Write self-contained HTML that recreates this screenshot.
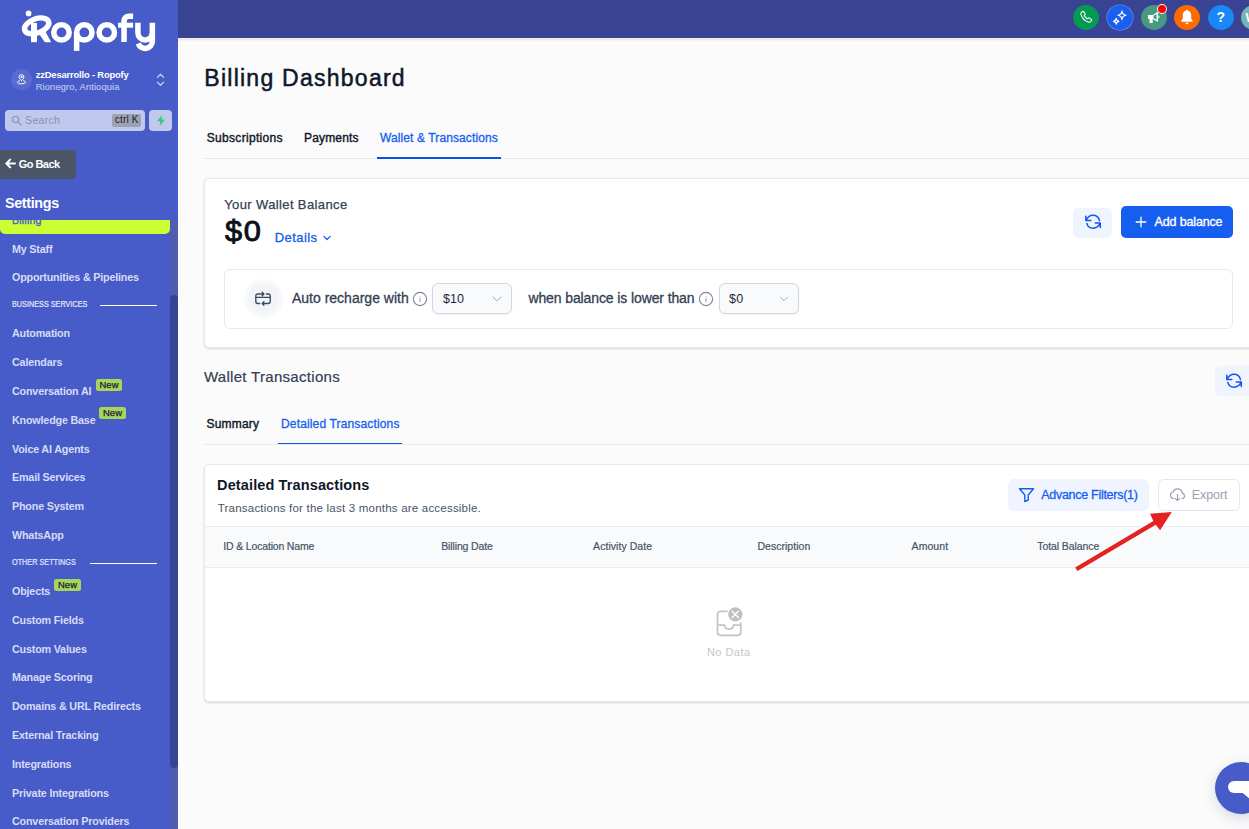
<!DOCTYPE html>
<html lang="en">
<head>
<meta charset="utf-8">
<title>Billing Dashboard</title>
<style>
*{box-sizing:border-box;margin:0;padding:0}
html,body{width:1249px;height:829px;overflow:hidden;background:#fbfbfc;font-family:"Liberation Sans",sans-serif;}
body{position:relative}
.abs{position:absolute}
.t{position:absolute;white-space:nowrap;line-height:1}
/* sidebar */
#sidebar{position:absolute;left:0;top:0;width:178px;height:829px;background:#475cc8;overflow:hidden}
#topbar{position:absolute;left:178px;top:0;width:1071px;height:38px;background:#384394}
#topshadow{position:absolute;left:178px;top:38px;width:1071px;height:4px;background:linear-gradient(#f3f2ee 0%,#ebebeb 35%,#f6f6f7 75%,#fbfbfc 100%)}
.nav{position:absolute;left:11.7px;white-space:nowrap;line-height:14px;font-size:11.7px;font-weight:bold;color:#d6dbf6;letter-spacing:-0.2px;transform:scaleX(.92);transform-origin:0 0}
.sec{position:absolute;left:11.7px;white-space:nowrap;line-height:8.7px;font-size:8.7px;color:#e4e7fa;letter-spacing:0;transform:scaleX(.836);transform-origin:0 0;-webkit-text-stroke:.2px #e4e7fa}
.secline{position:absolute;height:1px;background:#fff}
.new{position:absolute;height:12px;border-radius:2.500px;background:#a5d65a;color:#172036;font-size:9.400px;line-height:12.400px;text-align:center;-webkit-text-stroke:.25px #172036;letter-spacing:.15px}
.circ{position:absolute;top:4.900px;width:26px;height:25.100px;border-radius:50%}
/* main */
.card{position:absolute;background:#fff;border:1px solid #e6e8ec;border-radius:5px;box-shadow:0 1px 2px rgba(16,24,40,.10),0 1px 3px rgba(16,24,40,.05)}
.tab{position:absolute;white-space:nowrap;font-size:12px;line-height:1;color:#101828;-webkit-text-stroke:.4px #101828}
.tab.act{color:#155eef;-webkit-text-stroke:.3px #155eef}
.th{position:absolute;top:540px;white-space:nowrap;font-size:10.5px;line-height:1;color:#475467;-webkit-text-stroke:.2px #475467}
.sel{position:absolute;top:283.300px;height:31.200px;border:1px solid #d3d8e0;border-radius:6px;background:#f9fafb;box-shadow:0 1px 2px rgba(16,24,40,.05)}
</style>
</head>
<body>
<div id="main">
<div class="t" id="title" style="left:204.34px;top:67.13px;font-size:23px;color:#0f172a;-webkit-text-stroke:.5px #0f172a;letter-spacing:1.253px">Billing Dashboard</div>
<div id="tab1" class="tab" style="left:206.74px;top:132.14px;font-size:12px;letter-spacing:0.314px">Subscriptions</div>
<div id="tab2" class="tab" style="left:304.04px;top:132.14px;font-size:12px;letter-spacing:0.166px">Payments</div>
<div id="tab3" class="tab act" style="left:380.04px;top:132.14px;font-size:12px;letter-spacing:0.106px">Wallet &amp; Transactions</div>
<div class="abs" style="left:204px;top:158px;width:1045px;height:1px;background:#e7e9ed"></div>
<div class="abs" style="left:377px;top:157px;width:124px;height:2px;background:#0b4fea"></div>

<div class="card" style="left:204px;top:178px;width:1080px;height:169.500px"></div>
<div class="t" id="ywb" style="left:224.19px;top:197.50px;font-size:13px;color:#344054;-webkit-text-stroke:.25px #344054;letter-spacing:0.379px">Your Wallet Balance</div>
<div class="t" id="bal" style="left:225.2px;top:217.4px;font-size:29px;color:#0b0f19;letter-spacing:1.6px;-webkit-text-stroke:.9px #0b0f19;transform:scaleX(1.06);transform-origin:0 0">$0</div>
<div class="t" id="details" style="left:274.79px;top:230.80px;font-size:13px;color:#155eef;-webkit-text-stroke:.3px #155eef;letter-spacing:0.430px">Details</div>
<svg class="abs" style="left:321.500px;top:234px" width="10" height="8" viewBox="0 0 10 8" fill="none" stroke="#155eef" stroke-width="1.200" stroke-linecap="round" stroke-linejoin="round"><path d="M1.800 2.300L5 5.500L8.200 2.300"/></svg>
<div class="abs" style="left:1073px;top:208px;width:39px;height:30px;border-radius:5px;background:#eff4ff"></div>
<svg class="abs rf" style="left:1085px;top:214px" width="17" height="16" viewBox="0 0 17 16" fill="none" stroke="#1257ee" stroke-width="1.500" stroke-linecap="round" stroke-linejoin="round"><path d="M.8 2.200V6.600H5.800M.9 6.500C2.500 3.300 5 1.300 7.800 1.300C11.200 1.300 13.800 3.600 14.500 6.600M10.300 9.100H15.300V13.600M15.200 9.200C13.600 12.400 11 14.200 8.100 14.200C5 14.200 2.500 12.300 1.800 9.400"/></svg>
<div class="abs" style="left:1121px;top:206px;width:112px;height:32px;border-radius:5px;background:#155eef"></div>
<svg class="abs" style="left:1135px;top:216px" width="12" height="12" viewBox="0 0 12 12" stroke="#fff" stroke-width="1.300" stroke-linecap="round"><path d="M6 1.200V10.800M1.200 6H10.800"/></svg>
<div class="t" id="addbal" style="left:1154.61px;top:215.72px;font-size:12.5px;color:#fff;-webkit-text-stroke:.35px #fff;letter-spacing:-0.154px">Add balance</div>

<div class="abs" style="left:224px;top:269.300px;width:1009px;height:59.400px;border:1px solid #e6e8ec;border-radius:6px;background:#fff"></div>
<div class="abs" style="left:244.200px;top:279.100px;width:38.800px;height:38.800px;border-radius:50%;background:#f8f9fb"></div>
<div class="abs" style="left:248.300px;top:283.200px;width:30.600px;height:30.600px;border-radius:50%;background:#f2f4f7"></div>
<svg class="abs" style="left:255px;top:291px" width="16" height="16" viewBox="0 0 16 16" fill="none" stroke="#3b4a63" stroke-width="1.350" stroke-linecap="round" stroke-linejoin="round"><path d="M11.400 3H13.200A2 2 0 0 1 15.200 5V10.500A2 2 0 0 1 13.200 12.500H7.400M4.700 12.500H2.800A2 2 0 0 1 .8 10.500V5A2 2 0 0 1 2.800 3H8.700M7.200 1.300L8.900 3L7.200 4.700M8.900 10.800L7.200 12.500L8.900 14.200M.8 6.400H15.200"/></svg>
<div class="t" id="arw" style="left:291.93px;top:291.45px;font-size:14px;color:#344054;-webkit-text-stroke:.3px #344054;letter-spacing:0.006px">Auto recharge with</div>
<svg class="abs" style="left:411.8px;top:290.900px" width="16" height="16" viewBox="0 0 16 16" fill="none" stroke="#7a869b" stroke-width="1.100" stroke-linecap="round"><circle cx="8" cy="8" r="6.600"/><path d="M8 7.600V10.800" stroke="#98a2b3"/><circle cx="8" cy="5.500" r=".55" fill="#98a2b3" stroke="none"/></svg>
<div class="sel" style="left:432.300px;width:79.500px"></div>
<div id="v10" class="t" style="left:443.01px;top:292.72px;font-size:12.5px;color:#1d2939;letter-spacing:0.008px">$10</div>
<svg class="abs" style="left:491px;top:295.200px" width="12" height="8" viewBox="0 0 12 8" fill="none" stroke="#a0a9b8" stroke-width="1" stroke-linecap="round" stroke-linejoin="round"><path d="M2 1.900L6 5.900L10 1.900"/></svg>
<div class="t" id="wbl" style="left:528.43px;top:291.45px;font-size:14px;color:#344054;-webkit-text-stroke:.3px #344054;letter-spacing:-0.110px">when balance is lower than</div>
<svg class="abs" style="left:697.8px;top:290.900px" width="16" height="16" viewBox="0 0 16 16" fill="none" stroke="#7a869b" stroke-width="1.100" stroke-linecap="round"><circle cx="8" cy="8" r="6.600"/><path d="M8 7.600V10.800" stroke="#98a2b3"/><circle cx="8" cy="5.500" r=".55" fill="#98a2b3" stroke="none"/></svg>
<div class="sel" style="left:719.300px;width:79.300px"></div>
<div id="v0" class="t" style="left:729.11px;top:292.72px;font-size:12.5px;color:#1d2939;letter-spacing:0.300px">$0</div>
<svg class="abs" style="left:778.200px;top:295.200px" width="12" height="8" viewBox="0 0 12 8" fill="none" stroke="#a0a9b8" stroke-width="1" stroke-linecap="round" stroke-linejoin="round"><path d="M2.500 2.200L6 5.700L9.500 2.200"/></svg>

<div class="t" id="wt" style="left:203.88px;top:369.30px;font-size:15px;color:#344054;-webkit-text-stroke:.2px #344054;letter-spacing:0.307px">Wallet Transactions</div>
<div class="abs" style="left:1215px;top:366px;width:39px;height:30px;border-radius:5px;background:#eff4ff"></div>
<svg class="abs rf" style="left:1226.3px;top:372.9px" width="17" height="16" viewBox="0 0 17 16" fill="none" stroke="#1257ee" stroke-width="1.500" stroke-linecap="round" stroke-linejoin="round"><path d="M.8 2.200V6.600H5.800M.9 6.500C2.500 3.300 5 1.300 7.800 1.300C11.200 1.300 13.800 3.600 14.500 6.600M10.300 9.100H15.300V13.600M15.200 9.200C13.600 12.400 11 14.200 8.100 14.200C5 14.200 2.500 12.300 1.800 9.400"/></svg>
<div id="tab4" class="tab" style="left:206.54px;top:418.04px;font-size:12px;letter-spacing:0.196px">Summary</div>
<div id="tab5" class="tab act" style="left:281.04px;top:418.04px;font-size:12px;letter-spacing:0.151px">Detailed Transactions</div>
<div class="abs" style="left:204px;top:444px;width:1045px;height:1px;background:#e7e9ed"></div>
<div class="abs" style="left:278px;top:442.600px;width:124px;height:1.500px;background:#0b4fea"></div>

<div class="card" style="left:204px;top:464px;width:1080px;height:238px"></div>
<div class="t" id="dt" style="left:217.10px;top:477.73px;font-size:14.5px;font-weight:bold;color:#101828;letter-spacing:0.120px">Detailed Transactions</div>
<div class="t" id="sub" style="left:217.77px;top:503.07px;font-size:11.5px;color:#475467;letter-spacing:0.211px">Transactions for the last 3 months are accessible.</div>
<div class="abs" style="left:205px;top:526px;width:1044px;height:42px;background:#f9fafb;border-top:1px solid #eaecf0;border-bottom:1px solid #eaecf0"></div>
<div id="th1" class="th" style="left:223.32px;top:540.51px;font-size:10.5px;letter-spacing:-0.171px">ID &amp; Location Name</div>
<div id="th2" class="th" style="left:441.22px;top:540.51px;font-size:10.5px;letter-spacing:-0.134px">Billing Date</div>
<div id="th3" class="th" style="left:593.12px;top:540.51px;font-size:10.5px;letter-spacing:0.050px">Activity Date</div>
<div id="th4" class="th" style="left:757.42px;top:540.51px;font-size:10.5px;letter-spacing:0.032px">Description</div>
<div id="th5" class="th" style="left:911.62px;top:540.51px;font-size:10.5px;letter-spacing:0.053px">Amount</div>
<div id="th6" class="th" style="left:1037.32px;top:540.51px;font-size:10.5px;letter-spacing:-0.091px">Total Balance</div>

<div class="abs" style="left:1008px;top:479px;width:141px;height:32.200px;border-radius:6px;background:#eff4ff"></div>
<svg class="abs" style="left:1018px;top:487px" width="17" height="16" viewBox="0 0 17 16" fill="none" stroke="#155eef" stroke-width="1.400" stroke-linejoin="round"><path d="M1.500 1.700H15.500L10.200 8V13L6.800 14.500V8Z"/></svg>
<div class="t" id="af" style="left:1041.21px;top:488.72px;font-size:12.5px;color:#155eef;-webkit-text-stroke:.3px #155eef;letter-spacing:-0.280px">Advance Filters(1)</div>
<div class="abs" style="left:1157.500px;top:479.200px;width:82.200px;height:31.400px;border-radius:5.500px;background:#fff;border:1px solid #e4e7ec"></div>
<svg class="abs" style="left:1169px;top:487px" width="17" height="16" viewBox="0 0 17 16" fill="none" stroke="#98a2b3" stroke-width="1.200" stroke-linecap="round" stroke-linejoin="round"><path d="M4.500 11.500C2.800 11.300 1.500 9.900 1.500 8.200C1.500 6.600 2.600 5.300 4.100 5C4.700 3.100 6.400 1.800 8.500 1.800C10.900 1.800 12.900 3.600 13.200 5.900C14.500 6.300 15.500 7.500 15.500 8.900C15.500 10.300 14.500 11.400 13.200 11.600"/><path d="M8.500 7.500V13.500M6.200 11.300L8.500 13.600L10.800 11.300"/></svg>
<div class="t" id="exp" style="left:1191.71px;top:488.72px;font-size:12.5px;color:#98a2b3;letter-spacing:-0.053px">Export</div>
<!-- arrow -->
<svg class="abs" style="left:1060px;top:500px" width="130" height="80" viewBox="1060 500 130 80"><path d="M1075.100 567.400L1153.400 520.900L1150 513.800L1171.800 511.900L1160.100 530.300L1155.800 524.700L1077.500 571.100Z" fill="#e52222"/></svg>
<!-- no data -->
<svg class="abs" style="left:714px;top:604px" width="34" height="36" viewBox="0 0 34 36" fill="none"><g transform="translate(0 1.800)"><path d="M13 5.500H6.500C4.800 5.500 3.500 6.800 3.500 8.500V26.500C3.500 28.200 4.800 29.500 6.500 29.500H23.800C25.500 29.500 26.800 28.200 26.800 26.500V17" stroke="#c4c4c4" stroke-width="1.700" stroke-linecap="round"/><path d="M3.500 19.300H10.500C10.500 21.800 12.500 23.300 15 23.300S19.500 21.800 19.500 19.300H26.800" stroke="#c4c4c4" stroke-width="1.700" stroke-linejoin="round"/></g><circle cx="21.300" cy="10.400" r="7.100" fill="#c0c0c0"/><path d="M18.200 7.300L24.400 13.500M24.400 7.300L18.200 13.500" stroke="#fff" stroke-width="1.300" stroke-linecap="round"/></svg>
<div class="t" id="nodata" style="left:706.89px;top:647.19px;font-size:11px;color:#c6c6c6;letter-spacing:0.475px">No Data</div>
<!-- chat -->
<div class="abs" style="left:1215px;top:761.500px;width:52px;height:52px;border-radius:50%;background:#475cc8;box-shadow:0 4px 14px rgba(40,60,90,.18)"></div>
<div class="abs" style="left:1228px;top:780.500px;width:40px;height:12.500px;border-radius:6.300px;background:#fff"></div>
<svg class="abs" style="left:1240px;top:792px" width="9" height="9" viewBox="0 0 9 9"><path d="M2 .5H9V6.200Z" fill="#fff"/></svg>
</div>
<div id="topbar"></div>
<div id="topicons">
<div class="circ" style="left:1073px;background:#059a52"></div>
<svg class="abs" style="left:1079px;top:10px" width="14" height="14" viewBox="0 0 14 14" fill="none" stroke="#fff" stroke-width="1.1" stroke-linejoin="round"><path d="M3.200 1.600C3.700 1.200 4.400 1.300 4.800 1.900L6 3.700C6.300 4.200 6.200 4.700 5.800 5.100L5.300 5.600C5.900 6.900 7 8.100 8.400 8.800L8.900 8.300C9.300 7.900 9.900 7.800 10.400 8.100L12.100 9.200C12.700 9.600 12.800 10.300 12.400 10.800L11.800 11.500C11.200 12.200 10.200 12.400 9.300 12.100C5.900 10.900 3.100 8.100 2 4.700C1.700 3.800 1.900 2.800 2.600 2.200Z"/></svg>
<div class="circ" style="left:1107px;background:#1a5fee;box-shadow:0 0 0 .5px #7d9ff2"></div>
<svg class="abs" style="left:1111.300px;top:9.200px" width="17.600" height="17.600" viewBox="0 0 16 16" fill="none" stroke="#fff" stroke-width="1.1" stroke-linejoin="round"><path d="M10 1.800Q10.300 5.200 13.600 5.700Q10.300 6.300 10 9.600Q9.600 6.300 6.300 5.700Q9.600 5.200 10 1.800Z"/><path d="M4.800 8.600Q5 10.800 7.200 11.200Q5 11.500 4.800 13.800Q4.500 11.500 2.300 11.200Q4.500 10.800 4.800 8.600Z"/></svg>
<div class="circ" style="left:1140.500px;background:#469a80"></div>
<svg class="abs" style="left:1147px;top:10.400px" width="16" height="15" viewBox="0 0 16 15"><path d="M1 5h4.500L11 1.800V12L5.500 9H1Z" fill="#fff"/><path d="M2.500 9h3.200V13H2.500Z" fill="#fff"/><path d="M6.500 5.800L9.500 4V9.800L6.500 8.200Z" fill="#469a80"/><path d="M11.500 5.500q1.300 1.400 0 2.800" stroke="#fff" fill="none" stroke-width="1"/></svg>
<div class="abs" style="left:1157.800px;top:4.800px;width:8.400px;height:8.400px;border-radius:50%;background:#fe0000;box-shadow:0 0 0 .9px #fff"></div>
<div class="circ" style="left:1174px;background:#ff6a00"></div>
<svg class="abs" style="left:1180px;top:8.500px" width="14" height="17" viewBox="0 0 14 17"><path d="M7 .8C7.600 .8 8 1.200 8 1.800C10 2.300 11.200 4 11.200 6.200V9.600L12.800 12.200V12.800H1.200V12.200L2.800 9.600V6.200C2.800 4 4 2.300 6 1.800C6 1.200 6.400 .8 7 .8Z" fill="#fff"/><path d="M5.300 13.800H8.700C8.500 14.700 7.800 15.200 7 15.200S5.500 14.700 5.300 13.800Z" fill="#fff"/></svg>
<div class="circ" style="left:1208px;background:#1a87f6"></div>
<div class="t" style="left:1216.500px;top:10px;font-size:14px;font-weight:bold;color:#fff">?</div>
<div class="circ" style="left:1241px;background:#76b3b8"></div>
<div class="t" style="left:1245.500px;top:10.500px;font-size:13px;font-weight:bold;color:#fff">W</div>
</div>
<div id="topshadow"></div>
<div id="sidebar">
<!-- logo -->
<svg class="abs" style="left:0;top:0" width="178" height="60" viewBox="0 0 178 60">
 <g fill="none" stroke="#fff" stroke-width="5.5">
  <circle cx="28.6" cy="13.4" r="2.85" fill="#fff" stroke="none"/>
  <ellipse cx="36.7" cy="25.9" rx="12.7" ry="7.1" transform="rotate(-20 36.7 25.9)" stroke-width="5.4"/>
  <path d="M31 23H37V42.200H31Z" fill="#fff" stroke="none"/>
  <path d="M39.500 34.600L40.500 32.500L45.500 31.800L51.200 42.200H44.900Z" fill="#fff" stroke="none"/>
  <circle cx="61.5" cy="32.4" r="7.7"/>
  <path d="M76.650 32.400V50.900"/>
  <circle cx="84.3" cy="32.4" r="7.7"/>
  <circle cx="106.8" cy="32.4" r="7.7"/>
  <path d="M124.050 42V20.950A4.800 4.800 0 0 1 128.850 16.150H133.100"/>
  <path d="M118 25.200H133.100" stroke-width="5"/>
  <path d="M137.900 22.700V32.800A7.220 7.220 0 0 0 152.350 32.800"/>
  <path d="M152.350 22.700V41A7.220 7.220 0 0 1 138.300 43.500"/>
 </g>
</svg>
<!-- account -->
<div class="abs" style="left:11.4px;top:69.4px;width:20.6px;height:20.6px;border-radius:50%;background:#5a6bd0"></div>
<svg class="abs" style="left:16px;top:74px" width="11" height="11" viewBox="0 0 11 11" fill="none" stroke="#fff" stroke-width="1" stroke-linecap="round" stroke-linejoin="round">
 <path d="M5.5 6.6C7 5.2 7.9 4.3 7.9 3.1a2.4 2.4 0 0 0-4.8 0C3.100 4.3 4 5.200 5.500 6.600Z"/>
 <circle cx="5.500" cy="3.100" r=".6"/>
 <path d="M3.400 6.800C2.200 7.100 1.400 7.600 1.400 8.200C1.400 9.100 3.200 9.800 5.500 9.800S9.600 9.100 9.600 8.200C9.600 7.600 8.800 7.100 7.600 6.800"/>
</svg>
<div class="t" id="acct1" style="left:35.68px;top:70.14px;font-size:9.4px;font-weight:bold;color:#fff;letter-spacing:-0.162px">zzDesarrollo - Ropofy</div>
<div class="t" id="acct2" style="left:35.68px;top:82.14px;font-size:9.4px;color:#b9c1ef;letter-spacing:0.111px;-webkit-text-stroke:.2px #b9c1ef">Rionegro, Antioquia</div>
<svg class="abs" style="left:156px;top:72px" width="9" height="16" viewBox="0 0 9 16" fill="none" stroke="#c3c9ef" stroke-width="1.3" stroke-linecap="round" stroke-linejoin="round">
 <path d="M1.500 5.300L4.500 2.300L7.500 5.300"/><path d="M1.500 10.300L4.500 13.300L7.500 10.300"/>
</svg>
<!-- search -->
<div class="abs" style="left:5px;top:110px;width:140px;height:21px;border-radius:4px;background:#c1c8ee"></div>
<svg class="abs" style="left:10.600px;top:114.600px" width="11.4" height="11.4" viewBox="0 0 12 12" fill="none" stroke="#9499b1" stroke-width="1.4" stroke-linecap="round">
 <circle cx="4.800" cy="4.800" r="3.300"/><path d="M7.400 7.400L10.500 10.500"/>
</svg>
<div class="t" id="srch" style="left:25.12px;top:114.93px;font-size:10.6px;color:#8a90ab;letter-spacing:0.258px">Search</div>
<div class="abs" style="left:112px;top:114px;width:29px;height:13px;border-radius:2px;background:#9ba2b0"></div>
<div class="t" id="ctrlk" style="left:114.85px;top:114.53px;font-size:10px;color:#1f2433;letter-spacing:0.184px">ctrl K</div>
<div class="abs" style="left:149px;top:110px;width:23px;height:21px;border-radius:4px;background:#c1c8ee"></div>
<svg class="abs" style="left:155.500px;top:115px" width="10" height="11" viewBox="0 0 10 11"><path d="M5.800 0.300L1 6.200H4.300L3.800 10.700L9 4.600H5.500Z" fill="#37c978"/></svg>
<!-- go back -->
<div class="abs" style="left:-4px;top:150px;width:80px;height:28.500px;border-radius:4px;background:#4a5568"></div>
<svg class="abs" style="left:4.500px;top:158.200px" width="11" height="11" viewBox="0 0 11 11" fill="none" stroke="#fff" stroke-width="2" stroke-linecap="round" stroke-linejoin="round"><path d="M10 5.500H1.500M5.200 1.600L1.300 5.500L5.200 9.400"/></svg>
<div class="t" id="goback" style="left:18.70px;top:159.09px;font-size:11px;font-weight:bold;color:#fff;letter-spacing:-0.522px">Go Back</div>
<div class="t" id="settings" style="left:4.91px;top:196.00px;font-size:14.3px;font-weight:bold;color:#fff;letter-spacing:-0.305px">Settings</div>
<!-- nav scroll area -->
<div class="abs" style="left:0;top:220px;width:170px;height:14px;background:#ccff33;border-radius:0 0 5px 5px;overflow:hidden">
 <div class="t" style="left:12px;top:-7.1px;font-size:11.7px;line-height:14px;color:#4a5bc9;letter-spacing:.15px;-webkit-text-stroke:.35px #4a5bc9;transform:scaleX(.92);transform-origin:0 0">Billing</div>
</div>
<div class="nav" style="top:242.34px">My Staff</div>
<div class="nav" style="top:270.14px">Opportunities &amp; Pipelines</div>
<div class="nav" style="top:326.44px">Automation</div>
<div class="nav" style="top:355.29px">Calendars</div>
<div class="nav" style="top:384.14px">Conversation AI</div>
<div class="nav" style="top:412.99px">Knowledge Base</div>
<div class="nav" style="top:441.84px">Voice AI Agents</div>
<div class="nav" style="top:469.69px">Email Services</div>
<div class="nav" style="top:498.54px">Phone System</div>
<div class="nav" style="top:528.39px">WhatsApp</div>
<div class="nav" style="top:584.14px">Objects</div>
<div class="nav" style="top:612.99px">Custom Fields</div>
<div class="nav" style="top:641.84px">Custom Values</div>
<div class="nav" style="top:669.69px">Manage Scoring</div>
<div class="nav" style="top:698.54px">Domains &amp; URL Redirects</div>
<div class="nav" style="top:728.39px">External Tracking</div>
<div class="nav" style="top:757.24px">Integrations</div>
<div class="nav" style="top:786.09px">Private Integrations</div>
<div class="nav" style="top:813.94px">Conversation Providers</div>
<div class="sec" style="top:299.6px">BUSINESS SERVICES</div><div class="secline" style="left:100px;top:305px;width:57px"></div>
<div class="sec" style="top:557.6px">OTHER SETTINGS</div><div class="secline" style="left:90px;top:563px;width:67px"></div>
<div class="new" style="left:96px;top:379px;width:26px">New</div>
<div class="new" style="left:99px;top:407px;width:27px">New</div>
<div class="new" style="left:54px;top:579px;width:27px">New</div>
<!-- scrollbar -->
<div class="abs" style="left:170px;top:220px;width:8px;height:609px;background:#505cad;border-radius:4px 4px 0 0"></div>
<div class="abs" style="left:170px;top:295px;width:8px;height:473px;background:#384394;border-radius:4px"></div>
</div>
</body>
</html>
